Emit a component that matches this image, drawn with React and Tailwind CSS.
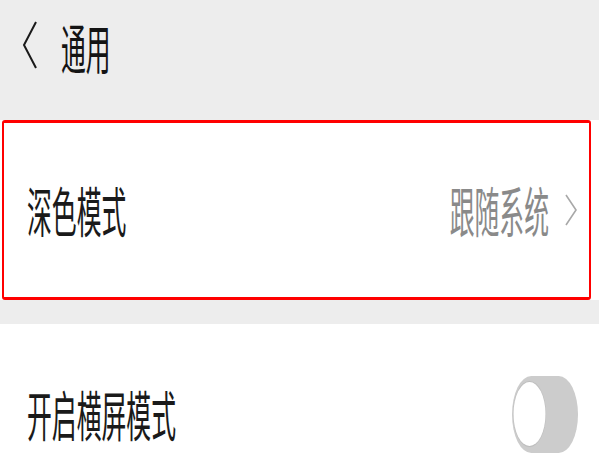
import React from "react";

const font = { fontFamily: '"Noto Sans CJK SC", "Noto Sans", sans-serif' };

function Squish({ children, className = "", right = false }) {
  return (
    <span
      className={`inline-block whitespace-nowrap text-[54px] leading-none scale-x-[0.46] ${
        right ? "origin-right" : "origin-left"
      } ${className}`}
    >
      {children}
    </span>
  );
}

export default function App() {
  return (
    <div className="w-[599px] h-[461px] overflow-hidden bg-white" style={font}>
      {/* header */}
      <div className="h-[120px] bg-[#ededed] flex items-start pt-[20px]">
        <svg className="ml-[22px] mt-[0px]" width="16" height="50" viewBox="0 0 16 50">
          <polyline points="14,2 2,25 14,48" fill="none" stroke="#1a1a1a" strokeWidth="2" />
        </svg>
        <div className="ml-[23px] w-[60px]">
          <Squish className="text-[#141414]">通用</Squish>
        </div>
      </div>

      {/* dark mode row */}
      <div className="bg-white">
        <div className="ml-[2px] mr-[8px] h-[180px] border-[3px] border-x-2 border-[#ff0000] rounded-[3px] flex items-center justify-between pl-[23px] pr-[11px]">
          <div className="w-[100px]">
            <Squish className="text-[#1a1a1a]">深色模式</Squish>
          </div>
          <div className="flex items-center">
            <div className="w-[100px] flex justify-end">
              <Squish right className="text-[#8a8a8a]">跟随系统</Squish>
            </div>
            <svg className="ml-[15px]" width="14" height="32" viewBox="0 0 14 32">
              <polyline points="2,1 12,16 2,31" fill="none" stroke="#a8a8a8" strokeWidth="1.6" />
            </svg>
          </div>
        </div>
      </div>

      <div className="h-[24px] bg-[#ededed]" />

      {/* landscape row */}
      <div className="h-[180px] flex items-center justify-between pl-[27px] pr-[21px]">
        <div className="w-[150px]">
          <Squish className="text-[#1a1a1a]">开启横屏模式</Squish>
        </div>
        <div className="w-[132px] h-[77px] rounded-full bg-[#cccccc] flex items-center pl-[3px] scale-x-50 origin-right">
          <div className="w-[64px] h-[64px] rounded-full bg-white shadow-[0_0_1px_1px_rgba(0,0,0,0.08)]" />
        </div>
      </div>
    </div>
  );
}
